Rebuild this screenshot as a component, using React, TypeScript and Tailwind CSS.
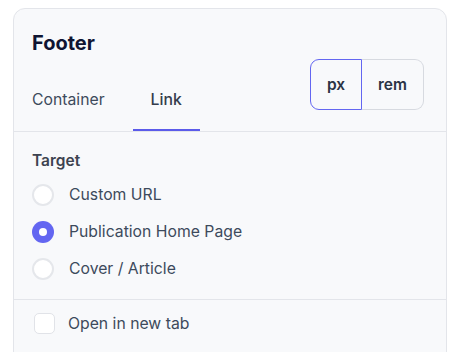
export default function App() {
  return (
    <div className="bg-white w-[458px] h-[352px] overflow-hidden pt-[8px] pl-[13px] pr-[11px] font-['Inter',sans-serif]">
      <div className="bg-[#f8f9fb] border border-[#e3e5ea] rounded-t-[12px] h-[400px]">
        {/* Header */}
        <div className="flex justify-between border-b border-[#e3e5ea] pl-[18px] pr-[22px]">
          <div>
            <h2 className="text-[20px] font-bold text-[#0f1533] mt-[22px] leading-[24px]">Footer</h2>
            <div className="flex mt-[35px]">
              <div className="text-[15.75px] text-[#3d4a5c] pb-[21px] pr-[28px] leading-[20px]">Container</div>
              <div className="text-[15.75px] font-medium text-[#343c4c] px-[18px] pb-[19px] leading-[20px] border-b-2 border-[#5b5bea]">Link</div>
            </div>
          </div>
          <div className="flex mt-[50px] h-[51px]">
            <button className="w-[52px] border border-[#6366f1] rounded-l-[9px] text-[15.5px] font-semibold text-[#2b3445]">px</button>
            <button className="w-[62px] border border-l-0 border-[#d7dae0] rounded-r-[9px] text-[15.5px] font-semibold text-[#2b3445]">rem</button>
          </div>
        </div>
        {/* Target */}
        <div className="pl-[18px] pt-[19px] pb-[19px] border-b border-[#e3e5ea]">
          <div className="text-[15.5px] font-semibold text-[#3d4350] leading-[20px]">Target</div>
          <div className="flex flex-col gap-[15px] mt-[13px]">
            {[
              { label: "Custom URL", checked: false },
              { label: "Publication Home Page", checked: true },
              { label: "Cover / Article", checked: false },
            ].map((o) => (
              <label key={o.label} className="flex items-center gap-[15px] h-[22px]">
                {o.checked ? (
                  <span className="w-[22px] h-[22px] rounded-full bg-[#6366f1] flex items-center justify-center">
                    <span className="w-[8px] h-[8px] rounded-full bg-white" />
                  </span>
                ) : (
                  <span className="w-[22px] h-[22px] rounded-full bg-white border-2 border-[#e5e7eb]" />
                )}
                <span className="text-[15.75px] text-[#3d4a5c]">{o.label}</span>
              </label>
            ))}
          </div>
        </div>
        {/* Checkbox */}
        <label className="flex items-center gap-[13px] pl-[20px] pt-[12px]">
          <span className="w-[21px] h-[21px] rounded-[5px] bg-white border border-[#e1e3e8]" />
          <span className="text-[15.75px] text-[#3d4a5c]">Open in new tab</span>
        </label>
      </div>
    </div>
  );
}
